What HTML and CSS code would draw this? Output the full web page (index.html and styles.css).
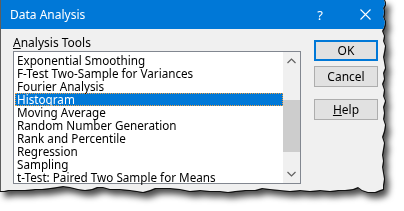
FILE: index.html
```html
<!DOCTYPE html>
<html>
<head>
<meta charset="utf-8">
<link rel="stylesheet" href="styles.css">
</head>
<body>
<div class="shadow">
  <div class="dialog">
    <div class="titlebar">
      <span class="title">Data Analysis</span>
      <span class="help-q">?</span>
      <svg class="close" width="11" height="11" viewBox="0 0 11 11"><path d="M0.5 0.5 L10.5 10.5 M10.5 0.5 L0.5 10.5" stroke="#fff" stroke-width="1.1" fill="none"/></svg>
    </div>
    <div class="content">
      <div class="left">
        <div class="label"><u>A</u>nalysis Tools</div>
        <div class="listbox">
          <ul class="items">
            <li>Exponential Smoothing</li>
            <li>F-Test Two-Sample for Variances</li>
            <li>Fourier Analysis</li>
            <li class="selected">Histogram</li>
            <li>Moving Average</li>
            <li>Random Number Generation</li>
            <li>Rank and Percentile</li>
            <li>Regression</li>
            <li>Sampling</li>
            <li>t-Test: Paired Two Sample for Means</li>
          </ul>
          <div class="scrollbar">
            <svg class="arrow" width="9" height="6" viewBox="0 0 9 6"><path d="M0.5 5 L4.5 1 L8.5 5" stroke="#606060" stroke-width="1.2" fill="none"/></svg>
            <div class="track"><div class="thumb"></div></div>
            <svg class="arrow" width="9" height="6" viewBox="0 0 9 6"><path d="M0.5 1 L4.5 5 L8.5 1" stroke="#606060" stroke-width="1.2" fill="none"/></svg>
          </div>
        </div>
      </div>
      <div class="buttons">
        <div class="btn default">OK</div>
        <div class="btn">Cancel</div>
        <div class="btn help"><u>H</u>elp</div>
      </div>
    </div>
  </div>
</div>
</body>
</html>
```
FILE: styles.css
```css
html, body {
  margin: 0;
  padding: 0;
  background: #ffffff;
  width: 404px;
  height: 211px;
  overflow: hidden;
}
body {
  font-family: "Noto Sans", "Open Sans", sans-serif;
  font-size: 12px;
  color: #000;
}
.shadow {
  width: 392px;
  height: 200px;
  filter: drop-shadow(1px 0 0 #111) drop-shadow(0 1px 0 #111) drop-shadow(4px 5px 3px rgba(0,0,0,0.7));
}
.dialog {
  width: 388px;
  height: 196px;
  background: #f0f0f0;
  box-sizing: border-box;
  border-left: 1px solid #5e5e5e;
  display: flex;
  flex-direction: column;
  clip-path: polygon(0 0, 384px 0, 385px 4px, 383px 8px, 384px 12px, 383px 17px, 385px 22px, 384px 27px, 382px 31px, 384px 36px, 383px 41px, 385px 46px, 384px 52px, 383px 57px, 384px 62px, 385px 68px, 383px 73px, 384px 79px, 382px 84px, 384px 90px, 383px 96px, 385px 101px, 383px 107px, 384px 113px, 383px 119px, 385px 125px, 384px 131px, 382px 137px, 384px 143px, 383px 149px, 382px 155px, 383px 161px, 382px 167px, 383px 173px, 384px 179px, 383px 185px, 383px 189px, 380px 190px, 375px 192px, 368px 192px, 362px 190px, 358px 187px, 353px 189px, 345px 190px, 338px 190px, 330px 191px, 320px 190px, 310px 191px, 300px 190px, 290px 191px, 280px 190px, 270px 189px, 262px 188px, 255px 190px, 245px 190px, 235px 191px, 228px 192px, 220px 191px, 210px 191px, 200px 190px, 190px 191px, 180px 189px, 170px 188px, 160px 188px, 155px 188px, 150px 190px, 143px 192px, 137px 191px, 130px 190px, 120px 189px, 110px 189px, 103px 187px, 97px 187px, 92px 189px, 85px 190px, 78px 189px, 70px 187px, 63px 186px, 57px 187px, 50px 188px, 42px 189px, 35px 189px, 25px 190px, 15px 190px, 8px 190px, 4px 191px, 0 191px);
}
.titlebar {
  height: 29px;
  flex: none;
  background: #0078d7;
  color: #fff;
  display: flex;
  align-items: center;
  padding-left: 9px;
}
.title {
  font-size: 12px;
  flex: 1;
}
.help-q {
  font-size: 13px;
  margin-right: 37px;
}
.close {
  margin-right: 17px;
}
.content {
  display: flex;
  padding-left: 12px;
}
.left {
  width: 288px;
  padding-top: 6px;
}
.label {
  height: 16px;
  line-height: 16px;
}
.listbox {
  height: 133px;
  box-sizing: border-box;
  border: 1px solid #828790;
  background: #fff;
  display: flex;
}
.items {
  list-style: none;
  margin: 0;
  padding: 2px 0 0 1px;
  flex: 1;
  font-size: 11.7px;
}
.items li {
  height: 13px;
  line-height: 13px;
  padding-left: 2px;
  white-space: nowrap;
  box-sizing: border-box;
}
.items li.selected {
  background: #0078d7;
  color: #fff;
  outline: 1px dotted #f0a040;
  outline-offset: -1px;
}
.scrollbar {
  width: 17px;
  flex: none;
  background: #f0f0f0;
  display: flex;
  flex-direction: column;
  align-items: center;
}
.arrow {
  flex: none;
  margin: 6px 0;
}
.track {
  flex: 1;
  width: 17px;
}
.thumb {
  margin-top: 30px;
  height: 52px;
  background: #cdcdcd;
}
.buttons {
  margin-left: 13px;
  padding-top: 11px;
  display: flex;
  flex-direction: column;
  gap: 5px;
}
.btn {
  width: 64px;
  height: 21px;
  box-sizing: border-box;
  border: 1px solid #adadad;
  background: #e1e1e1;
  display: flex;
  align-items: center;
  justify-content: center;
  font-size: 12px;
}
.btn.default {
  border: 2px solid #0078d7;
}
.btn.help {
  margin-top: 7px;
}
```
